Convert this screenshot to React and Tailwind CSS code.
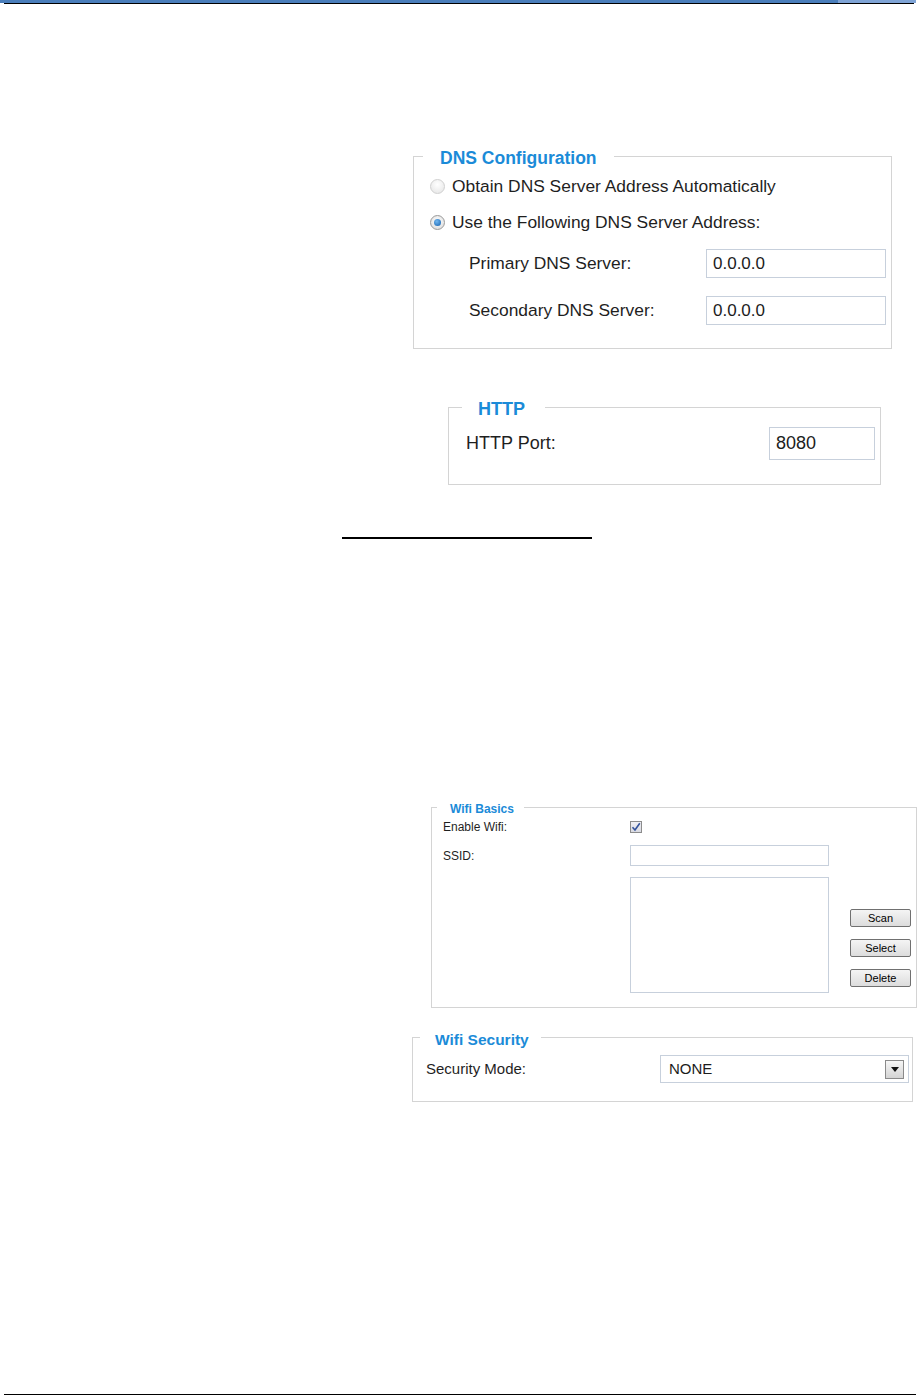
import React from "react";

function Radio({ checked }) {
  if (checked) {
    return (
      <span className="w-[15px] h-[15px] rounded-full border border-[#9a9a9a] bg-[radial-gradient(circle_at_50%_40%,#ffffff,#d6d6d6)] flex items-center justify-center shrink-0">
        <span className="w-[7px] h-[7px] rounded-full bg-[radial-gradient(circle_at_40%_35%,#6fb6f0,#1560ad)]" />
      </span>
    );
  }
  return (
    <span className="w-[15px] h-[15px] rounded-full border border-[#d0d0d0] bg-[radial-gradient(circle_at_50%_35%,#ffffff,#e3e3e3)] shrink-0" />
  );
}

function Field({ value, className }) {
  return (
    <input
      readOnly
      value={value}
      className={`border border-[#c7d0dc] bg-white text-[#1c1c1c] outline-none ${className}`}
    />
  );
}

function WinButton({ children }) {
  return (
    <button className="w-[61px] h-[18px] rounded-[2px] border border-[#707070] bg-[linear-gradient(#f4f4f4,#dcdcdc)] text-[11px] leading-none text-black">
      {children}
    </button>
  );
}

export default function App() {
  return (
    <div className="w-[920px] h-[1396px] bg-white flex flex-col font-['Liberation_Sans',Arial,sans-serif] text-[#1f1f1f]">
      {/* page header rule */}
      <div className="h-[3px] flex">
        <div className="w-[838px] bg-[#4a7ebb]" />
        <div className="w-[78px] bg-[#7fa4d6]" />
      </div>
      <div className="ml-[4px] w-[910px] h-[1px] bg-black" />

      {/* DNS Configuration */}
      <fieldset className="ml-[413px] mt-[140px] w-[479px] border border-[#d4d4d4] pb-[23px]">
        <legend className="ml-[9px] px-[17px] pt-[4px] text-[17.5px] leading-[20px] font-bold text-[#1b8bd8]">
          DNS Configuration
        </legend>
        <div>
          <div className="h-[36px] flex items-center pl-[16px] gap-[7px] text-[17.4px]">
            <Radio />
            <span>Obtain DNS Server Address Automatically</span>
          </div>
          <div className="h-[36px] flex items-center pl-[16px] gap-[7px] text-[17.4px]">
            <Radio checked />
            <span>Use the Following DNS Server Address:</span>
          </div>
          <div className="mt-[9px] h-[29px] flex items-center pl-[55px] text-[17.4px]">
            <span className="w-[237px]">Primary DNS Server:</span>
            <Field value="0.0.0.0" className="w-[180px] h-[29px] px-[6px] text-[17px]" />
          </div>
          <div className="mt-[18px] h-[29px] flex items-center pl-[55px] text-[17.4px]">
            <span className="w-[237px]">Secondary DNS Server:</span>
            <Field value="0.0.0.0" className="w-[180px] h-[29px] px-[6px] text-[17px]" />
          </div>
        </div>
      </fieldset>

      {/* HTTP */}
      <fieldset className="ml-[448px] mt-[46px] w-[433px] border border-[#d4d4d4] pb-[24px]">
        <legend className="ml-[13px] pl-[16px] pr-[20px] pt-[4px] text-[18px] leading-[20px] font-bold text-[#1b8bd8]">
          HTTP
        </legend>
        <div className="mt-[8px] h-[33px] flex items-center justify-between pl-[17px] pr-[5px] text-[18px]">
          <span>HTTP Port:</span>
          <Field value="8080" className="w-[106px] h-[33px] px-[6px] text-[18px]" />
        </div>
      </fieldset>

      {/* blank link line */}
      <div className="ml-[342px] mt-[52px] w-[250px] h-[2px] bg-black" />

      {/* Wifi Basics */}
      <fieldset className="ml-[431px] mt-[258px] w-[486px] border border-[#d4d4d4] pb-[14px]">
        <legend className="ml-[5px] pl-[13px] pr-[10px] pt-[4px] text-[12px] leading-[16px] font-bold text-[#1b8bd8]">
          Wifi Basics
        </legend>
        <div className="mt-[2px] h-[16px] flex items-center pl-[11px] text-[12px]">
          <span className="w-[187px]">Enable Wifi:</span>
          <span className="w-[12px] h-[12px] border border-[#8c8c8c] bg-[linear-gradient(#f0f0f4,#d9dae2)] flex items-center justify-center">
            <svg width="10" height="10" viewBox="0 0 10 10">
              <path d="M1.5 5.2 L4 8 L8.8 1.2" fill="none" stroke="#34539c" strokeWidth="1.6" />
            </svg>
          </span>
        </div>
        <div className="mt-[10px] h-[21px] flex items-center pl-[11px] text-[12px]">
          <span className="w-[187px]">SSID:</span>
          <Field value="" className="w-[199px] h-[21px] px-[4px] text-[12px]" />
        </div>
        <div className="mt-[11px] flex pl-[198px]">
          <div className="w-[199px] h-[116px] border border-[#c7d0dc] bg-white" />
          <div className="ml-[21px] mt-[32px] flex flex-col gap-[12px]">
            <WinButton>Scan</WinButton>
            <WinButton>Select</WinButton>
            <WinButton>Delete</WinButton>
          </div>
        </div>
      </fieldset>

      {/* Wifi Security */}
      <fieldset className="ml-[412px] mt-[17px] w-[501px] border border-[#d4d4d4] pb-[18px]">
        <legend className="ml-[7px] pl-[15px] pr-[12px] pt-[6px] text-[15.5px] leading-[18px] font-bold text-[#1b8bd8]">
          Wifi Security
        </legend>
        <div className="mt-[6px] h-[28px] flex items-center pl-[13px] text-[15px]">
          <span className="w-[234px]">Security Mode:</span>
          <div className="w-[249px] h-[28px] border border-[#c7d0dc] bg-white flex items-center pl-[8px] pr-[4px]">
            <span className="text-[15px] text-[#1c1c1c]">NONE</span>
            <span className="ml-auto w-[19px] h-[19px] border border-[#8a8a8a] bg-[linear-gradient(#f6f6f6,#d4d4d4)] flex items-center justify-center">
              <svg width="8" height="5" viewBox="0 0 8 5">
                <path d="M0 0 H8 L4 5 Z" fill="#111" />
              </svg>
            </span>
          </div>
        </div>
      </fieldset>

      {/* page footer rule */}
      <div className="mt-auto mb-[1px] ml-[4px] w-[912px] h-[1px] bg-black" />
    </div>
  );
}
